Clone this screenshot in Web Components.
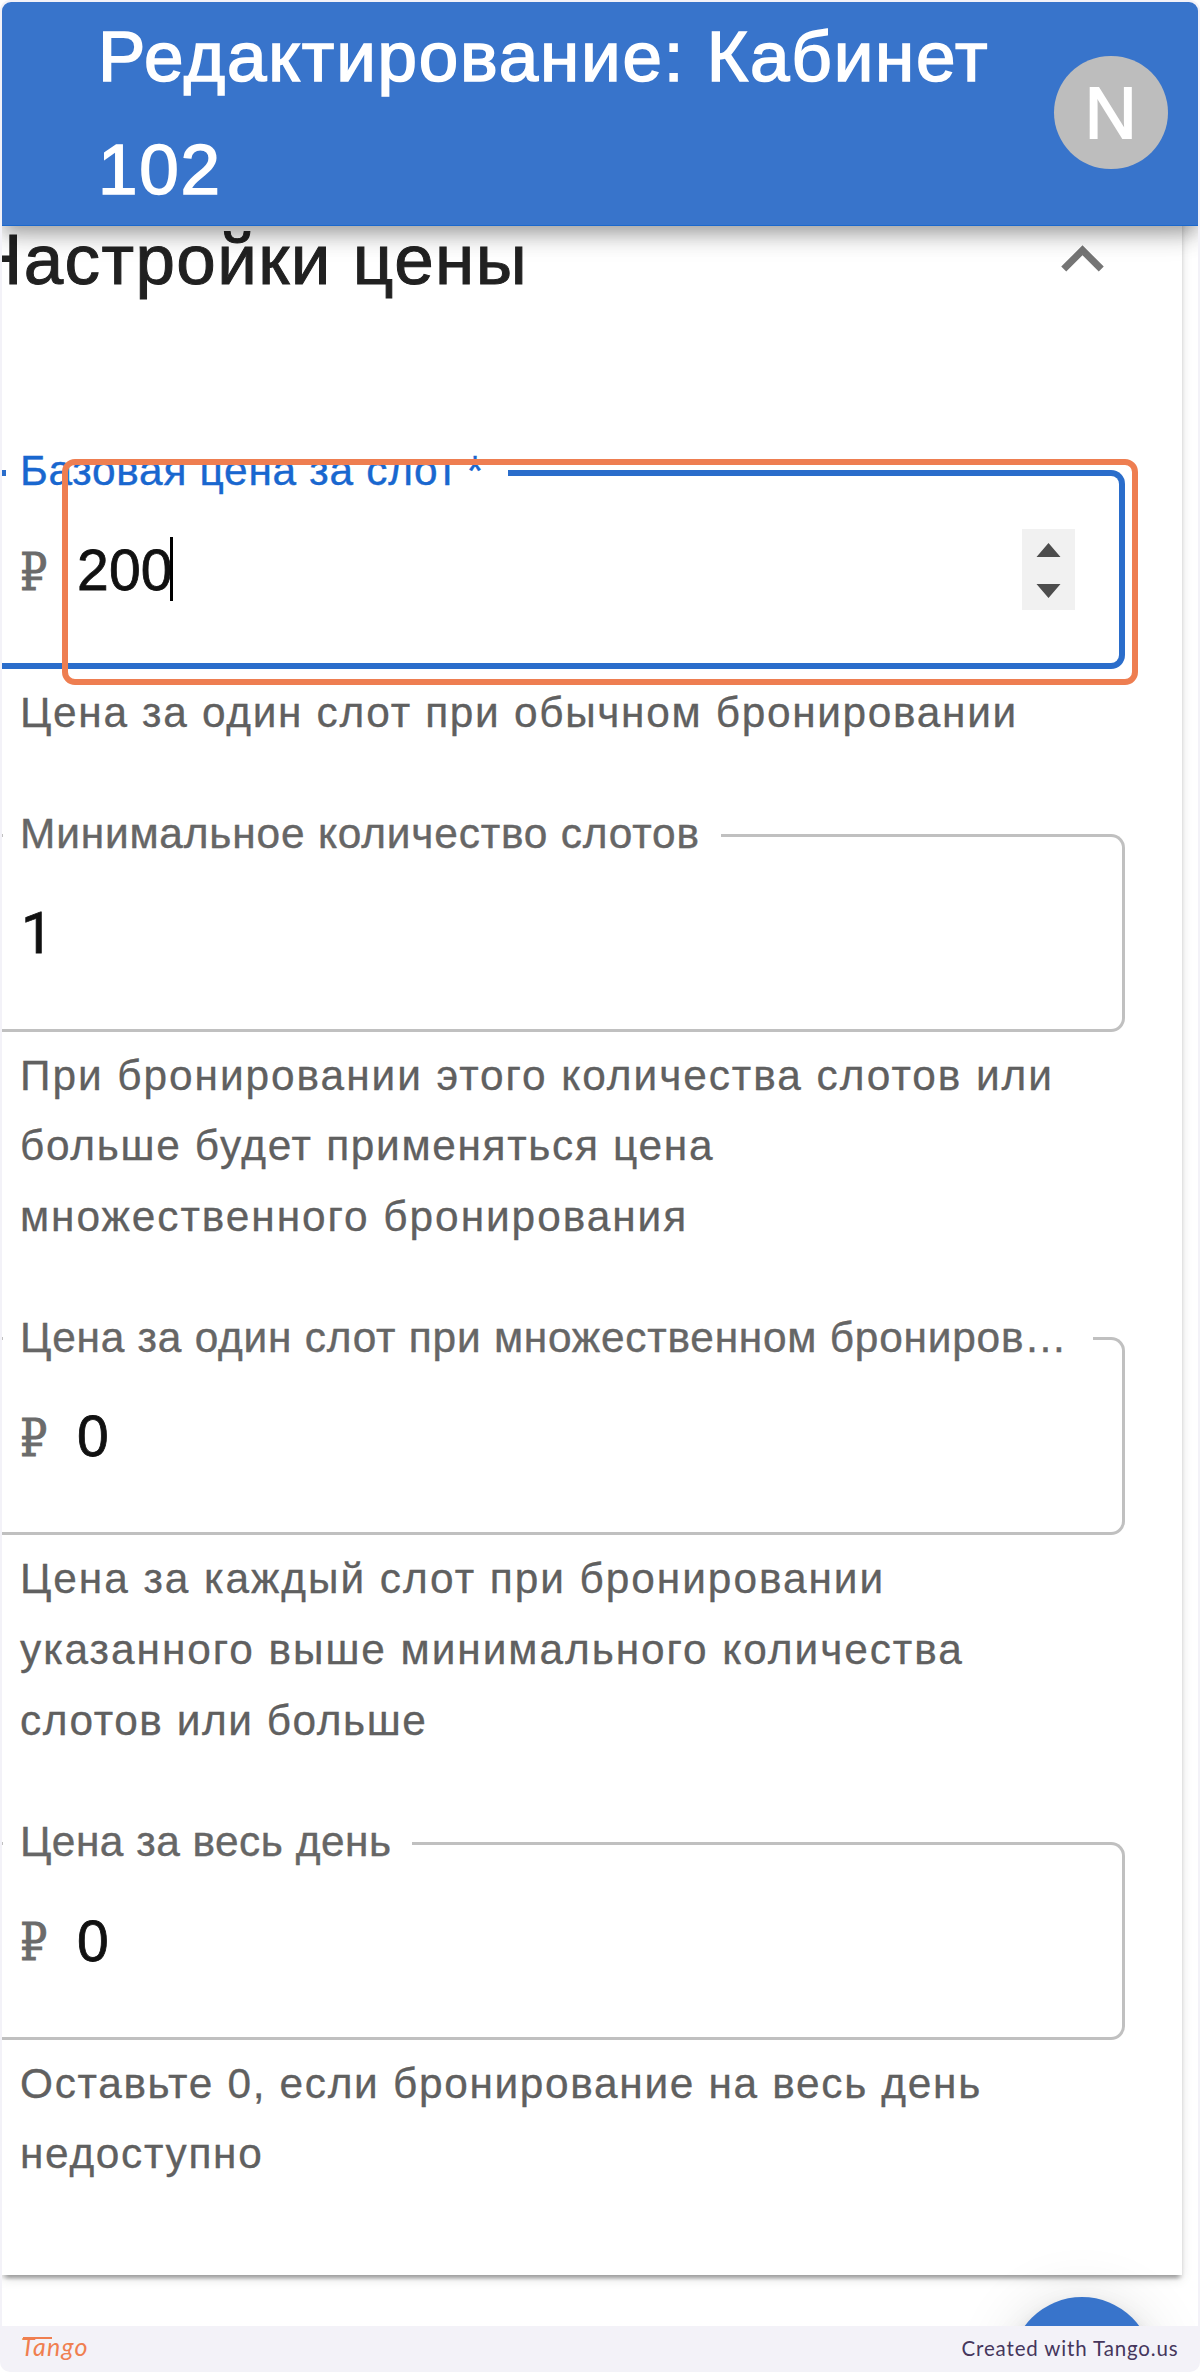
<!DOCTYPE html>
<html lang="ru">
<head>
<meta charset="utf-8">
<title>Редактирование: Кабинет 102</title>
<style>
  html, body { margin: 0; padding: 0; background: #fff; }
  body { font-family: "Liberation Sans", Arial, sans-serif; }
  .a { letter-spacing: 1.55px; }
  .b { letter-spacing: 1.68px; }
  .c { letter-spacing: 1.95px; }
</style>
</head>
<body>
<screen-frame>
  <app-bar slot="bar" initial="N">Редактирование: Кабинет 102</app-bar>
  <settings-card heading="Настройки цены">
    <price-field focused value="200" prefix="₽" style="--label-ls:.72px; --gap:23.5px">
      Базовая цена за слот&#8201;*
      <span slot="help" class="b">Цена за один слот при обычном бронировании</span>
    </price-field>
    <price-field value="1" style="--label-ls:.83px; --gap:21px; --digits:Roboto">
      Минимальное количество слотов
      <span slot="help"><span class="c">При бронировании этого количества слотов или</span><br><span class="b">больше будет применяться цена</span><br><span class="c">множественного бронирования</span></span>
    </price-field>
    <price-field value="0" prefix="₽" style="--label-ls:.77px; --gap:26px">
      Цена за один слот при множественном брониров…
      <span slot="help"><span class="c">Цена за каждый слот при бронировании</span><br><span class="c">указанного выше минимального количества</span><br><span class="a">слотов или больше</span></span>
    </price-field>
    <price-field value="0" prefix="₽" style="--label-ls:.5px; --gap:21px; margin-top:.7px">
      Цена за весь день
      <span slot="help" class="b">Оставьте 0, если бронирование на весь день<br>недоступно</span>
    </price-field>
  </settings-card>
  <tango-footer slot="footer"></tango-footer>
</screen-frame>

<script>
const define = (name, html, setup) => {
  const tpl = document.createElement('template');
  tpl.innerHTML = html;
  customElements.define(name, class extends HTMLElement {
    constructor() {
      super();
      this.attachShadow({ mode: 'open' }).append(tpl.content.cloneNode(true));
    }
    connectedCallback() { if (setup) setup(this, this.shadowRoot); }
  });
};

define('screen-frame', `
<style>
  :host { display: flex; flex-direction: column; box-sizing: border-box; width: 1200px; height: 2372px;
    background: #f3f2f8; border-radius: 10px; overflow: hidden; padding: 2px 2px 0; }
  .view { position: relative; height: 2324px; flex: none; display: flex; flex-direction: column;
    background: #fff; border-radius: 9px 9px 0 0; overflow: hidden; }
  ::slotted([slot=bar]) { z-index: 3; }
  .fab { position: absolute; left: 1009px; top: 2295px; width: 142px; height: 142px; border-radius: 50%;
    background: #3874cb; z-index: 2;
    box-shadow: 0 10.6px 17.6px -3.5px rgba(0,0,0,.2), 0 21px 35px rgba(0,0,0,.14), 0 3.5px 63px rgba(0,0,0,.12); }
</style>
<div class="view"><slot name="bar"></slot><slot></slot><div class="fab"></div></div>
<slot name="footer"></slot>`);

define('app-bar', `
<style>
  :host { display: flex; align-items: center; flex: none; position: relative; height: 224px; box-sizing: border-box;
    padding: 0 30.5px 0 96px; background: #3874cb; color: #fff; border-bottom: 1px solid #1b68cc;
    box-shadow: 0 7px 14px -3.5px rgba(0,0,0,.2), 0 14px 17.6px rgba(0,0,0,.14), 0 3.5px 35px rgba(0,0,0,.12); }
  .title { width: 930px; margin-top: -1px; font-size: 71px; line-height: 113px; letter-spacing: 1.78px; -webkit-text-stroke: 1.6px #fff; }
  .avatar { margin: -2px 0 0 auto; width: 113.5px; height: 113.5px; border-radius: 50%; background: #bdbdbd;
    display: flex; align-items: center; justify-content: center; font-size: 72px; line-height: 1; -webkit-text-stroke: 1.8px #fff; }
</style>
<div class="title"><slot></slot></div><div class="avatar"></div>`,
(el, root) => { root.querySelector('.avatar').textContent = el.getAttribute('initial'); });

define('settings-card', `
<style>
  :host { display: flex; flex-direction: column; flex: none; box-sizing: border-box; width: 1180px; height: 2072.5px; margin-top: -24px;
    background: #fff;
    box-shadow: 0 7px 3.5px -3.5px rgba(0,0,0,.2), 0 3.5px 3.5px rgba(0,0,0,.14), 0 3.5px 10.6px rgba(0,0,0,.12); }
  header { display: flex; align-items: center; height: 113px; padding-right: 57px; margin-bottom: 156px; }
  h2 { margin: 1px auto 0 -31px; font-weight: 400; font-size: 71px; line-height: 113px; letter-spacing: 1.4px; color: #212121; -webkit-text-stroke: 1px #212121; }
  svg { width: 85px; height: 85px; fill: #757575; margin-top: 1px; }
  .fields { display: flex; flex-direction: column; gap: 86px; width: 1122.5px; }
</style>
<header><h2></h2><svg viewBox="0 0 24 24"><path d="M12 8l-6 6 1.41 1.41L12 10.83l4.59 4.58L18 14z"/></svg></header>
<div class="fields"><slot></slot></div>`,
(el, root) => { root.querySelector('h2').textContent = el.getAttribute('heading'); });

define('price-field', `
<style>
  :host { display: flex; flex-direction: column; --line: #c0c0c0; --w: 3.5px; --stub: 1px; --label: #666; }
  :host([focused]) { --line: #2a6dcb; --w: 6.5px; --stub: 4px; --label: #1967cf; }
  .box { display: grid; height: 198px; position: relative; }
  .outline, .content { grid-area: 1 / 1; min-width: 0; }
  .outline { display: flex; }
  :host([focused]) .outline { margin-top: -1.5px; }
  .stub { width: var(--stub); box-sizing: border-box; border: solid var(--line); border-width: var(--w) 0; }
  .notch { box-sizing: border-box; border-bottom: var(--w) solid var(--line); padding: 0 var(--gap, 22px) 0 calc(18px - var(--stub)); }
  .label { margin-top: -30.5px; font-size: 42.4px; line-height: 61px; letter-spacing: var(--label-ls, .4px); color: var(--label); white-space: nowrap; -webkit-text-stroke: .4px currentColor; }
  :host([focused]) .label { margin-top: -30px; }
  .rest { flex: 1; box-sizing: border-box; border: solid var(--line); border-width: var(--w) var(--w) var(--w) 0; border-radius: 0 14px 14px 0; }
  .content { display: flex; align-items: center; padding: 0 49.5px 0 18px; color: #111; }
  .prefix { width: 56px; font: 55px/81px "Liberation Serif", "DejaVu Serif", serif; color: #6b6b6b; -webkit-text-stroke: 1px #6b6b6b;
    transform: scale(.78, .94); transform-origin: 0 61px; margin-top: 2px; }
  .value { font-family: var(--digits, inherit); font-size: 57px; line-height: 81px; letter-spacing: .2px; -webkit-text-stroke: .8px #111; margin-left: 1px; margin-top: 1px; }
  .caret { width: 3px; height: 64px; background: #000; margin-left: -3px; margin-top: -2px; }
  .spin { margin-left: auto; width: 53px; height: 81px; background: #f1f1f1; fill: #4d4d4d; margin-top: -1px; }
  .target { position: absolute; box-sizing: border-box; left: 60px; top: -12px; width: 1076px; height: 226px;
    border: 6px solid #ee7e51; border-radius: 13px; }
  .help { margin: 9px 0 -1px; padding-left: 18px; font-size: 42.4px; line-height: 70.6px; color: #606060; white-space: nowrap; -webkit-text-stroke: .3px currentColor; }
</style>
<div class="box">
  <div class="outline"><div class="stub"></div><div class="notch"><div class="label"><slot></slot></div></div><div class="rest"></div></div>
  <div class="content">
    <span class="prefix"></span><span class="value"></span><span class="caret"></span>
    <svg class="spin" viewBox="0 0 53 81"><path d="M14.5 28 26.5 14l12 14zM14.5 55h24l-12 14z"/></svg>
  </div>
  <div class="target"></div>
</div>
<div class="help"><slot name="help"></slot></div>`,
(el, root) => {
  const $ = s => root.querySelector(s);
  $('.value').textContent = el.getAttribute('value');
  if (el.hasAttribute('prefix')) $('.prefix').textContent = el.getAttribute('prefix'); else $('.prefix').remove();
  if (!el.hasAttribute('focused')) for (const s of ['.caret', '.spin', '.target']) $(s).remove();
});

define('tango-footer', `
<style>
  :host { display: flex; align-items: center; justify-content: space-between; height: 44px; flex: none; padding: 0 19.5px 2px 19px; font-family: Lato, sans-serif; }
  .logo { display: flex; flex-direction: column; color: #f07f50; font: italic 400 25px/26px Lato, sans-serif; letter-spacing: 1.2px; }
  .logo i { width: 29px; height: 1.5px; margin: 0 0 -6px 2px; background: #f07f50; }
  .credit { font-size: 20.5px; line-height: 26px; letter-spacing: .85px; color: #45365c; }
</style>
<div class="logo"><i></i><span>Tango</span></div>
<div class="credit">Created with Tango.us</div>`);
</script>
</body>
</html>
